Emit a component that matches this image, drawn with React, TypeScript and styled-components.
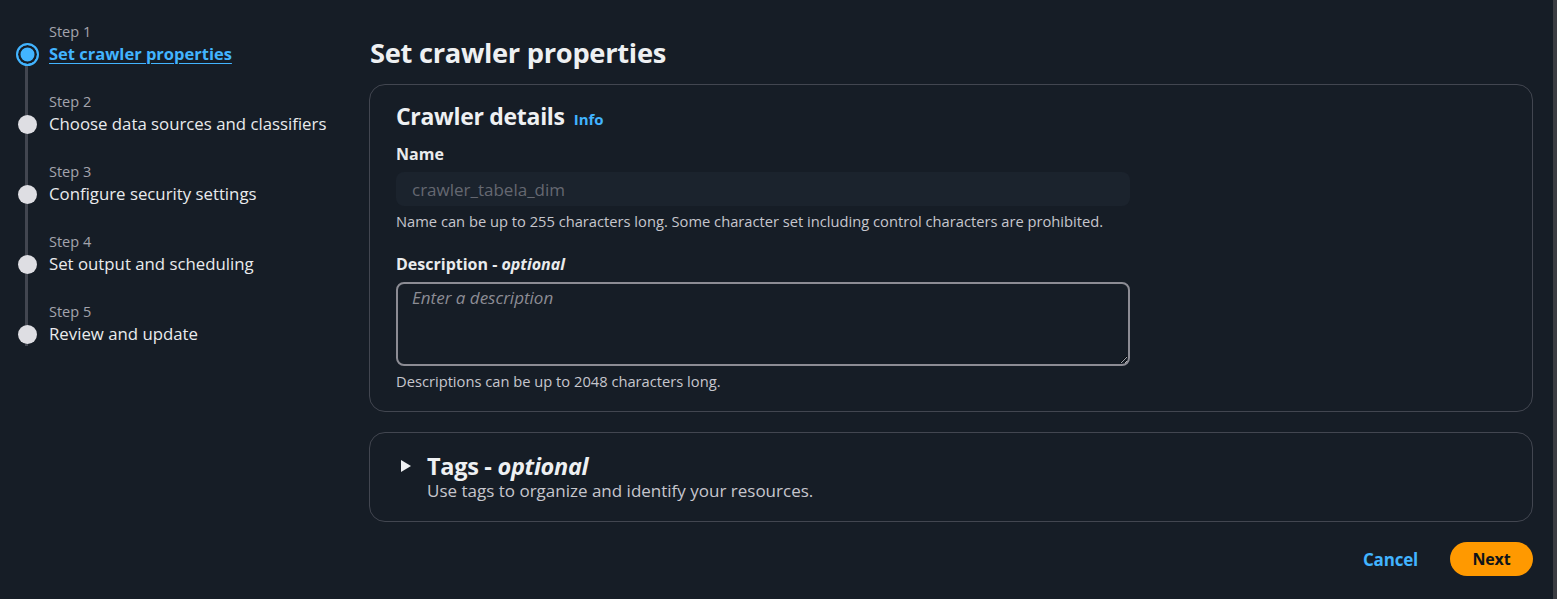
import React from "react";
import styled, { createGlobalStyle } from "styled-components";

const Global = createGlobalStyle`
  html, body { margin: 0; padding: 0; background: #161d26; }
  body { font-family: "Open Sans", Lato, sans-serif; color: #dedee3; }
  * { box-sizing: border-box; }
`;

const Page = styled.div`
  width: 1557px;
  height: 599px;
  display: flex;
  background: #161d26;
  border-right: 4px solid #3b3d42;
  overflow: hidden;
`;

const Sidebar = styled.nav`
  width: 369px;
  flex: none;
  padding: 22px 0 0 16px;
  display: flex;
  flex-direction: column;
`;

const Step = styled.div<{ $last?: boolean }>`
  position: relative;
  display: grid;
  grid-template-columns: 22px 1fr;
  grid-template-rows: 20px 24px;
  align-content: start;
  column-gap: 11px;
  height: 70px;
  &::after {
    content: "";
    display: ${(p) => (p.$last ? "none" : "block")};
    position: absolute;
    left: 9px;
    top: 44px;
    width: 3px;
    height: 70px;
    background: #424650;
  }
`;

const StepNum = styled.div`
  grid-column: 2;
  grid-row: 1;
  font-size: 14.5px;
  line-height: 20px;
  color: #a4a4ad;
`;

const Dot = styled.div<{ $active?: boolean }>`
  grid-column: 1;
  grid-row: 2;
  align-self: center;
  justify-self: center;
  position: relative;
  z-index: 1;
  width: ${(p) => (p.$active ? "23px" : "19px")};
  height: ${(p) => (p.$active ? "23px" : "19px")};
  border-radius: 50%;
  background: ${(p) => (p.$active ? "#42b4ff" : "#dedee3")};
  ${(p) =>
    p.$active
      ? `border: 2.5px solid #42b4ff; box-shadow: inset 0 0 0 2.5px #161d26;`
      : ""}
`;

const StepTitle = styled.div<{ $active?: boolean }>`
  grid-column: 2;
  grid-row: 2;
  font-size: ${(p) => (p.$active ? "16.5px" : "16.8px")};
  line-height: 24px;
  white-space: nowrap;
  color: ${(p) => (p.$active ? "#42b4ff" : "#e9ebed")};
  font-weight: ${(p) => (p.$active ? 700 : 400)};
  text-decoration: ${(p) => (p.$active ? "underline" : "none")};
  text-underline-offset: 3px;
`;

const Main = styled.main`
  flex: 1;
  padding: 34px 20px 0 0;
  display: flex;
  flex-direction: column;
`;

const PageTitle = styled.h1`
  margin: 0 0 12px 1px;
  font-size: 27.3px;
  line-height: 38px;
  font-weight: 700;
  letter-spacing: -0.3px;
  color: #eef0f2;
`;

const Card = styled.section<{ $mb?: number }>`
  border: 1px solid #424650;
  border-radius: 16px;
  margin-bottom: ${(p) => p.$mb ?? 0}px;
`;

const CardBody = styled.div`
  padding: 16px 26px 21px 26px;
  display: flex;
  flex-direction: column;
`;

const CardHeading = styled.h2`
  margin: 0 0 9px;
  display: flex;
  align-items: baseline;
  gap: 9px;
  font-size: 23px;
  line-height: 30px;
  font-weight: 700;
  letter-spacing: -0.3px;
  color: #eef0f2;
`;

const InfoLink = styled.a`
  font-size: 15px;
  font-weight: 700;
  letter-spacing: 0;
  color: #42b4ff;
  text-decoration: none;
`;

const Label = styled.label`
  display: block;
  font-size: 16px;
  line-height: 22px;
  font-weight: 700;
  color: #e9ebed;
  margin-bottom: 7px;
  em { font-style: italic; }
`;

const Field = styled.div<{ $mb?: number }>`
  width: 734px;
  margin-bottom: ${(p) => p.$mb ?? 0}px;
`;

const TextInput = styled.input`
  display: block;
  width: 100%;
  height: 34px;
  padding: 0 16px;
  border: none;
  border-radius: 8px;
  background: #1b232d;
  color: #656871;
  font-family: "Open Sans", sans-serif;
  font-size: 17px;
  outline: none;
`;

const TextArea = styled.textarea`
  display: block;
  width: 100%;
  height: 84px;
  padding: 2px 14px;
  border: 2px solid #8c8c94;
  border-radius: 8px;
  background: #161d26;
  color: #dedee3;
  font-family: "Open Sans", sans-serif;
  font-size: 17px;
  line-height: 24px;
  resize: vertical;
  outline: none;
  &::placeholder { color: #8c8c94; font-style: italic; }
`;

const Hint = styled.div`
  margin-top: 6px;
  font-size: 14.7px;
  line-height: 18px;
  color: #c6c6cd;
  white-space: nowrap;
`;

const Expander = styled.div`
  display: grid;
  grid-template-columns: 17px 1fr;
  column-gap: 10px;
  padding: 19px 26px 19px 30px;
  cursor: pointer;
`;

const Caret = styled.svg`
  align-self: center;
  grid-row: 1;
`;

const ExpTitle = styled.div`
  font-size: 23.5px;
  line-height: 28px;
  font-weight: 700;
  letter-spacing: -0.3px;
  color: #eef0f2;
  em { font-style: italic; }
`;

const ExpSub = styled.div`
  grid-column: 2;
  font-size: 17px;
  line-height: 22px;
  color: #c6c6cd;
`;

const Actions = styled.div`
  display: flex;
  justify-content: flex-end;
  align-items: center;
  gap: 32px;
  margin-top: 20px;
`;

const LinkButton = styled.button`
  background: none;
  border: none;
  padding: 0;
  font-family: "Open Sans", sans-serif;
  font-size: 17px;
  font-weight: 700;
  letter-spacing: -0.2px;
  color: #42b4ff;
  cursor: pointer;
`;

const PrimaryButton = styled.button`
  height: 34px;
  width: 83px;
  padding: 0;
  border: none;
  border-radius: 17px;
  background: #ff9900;
  color: #0f141a;
  font-family: "Open Sans", sans-serif;
  font-size: 16px;
  font-weight: 700;
  letter-spacing: -0.2px;
  cursor: pointer;
`;

const steps = [
  "Set crawler properties",
  "Choose data sources and classifiers",
  "Configure security settings",
  "Set output and scheduling",
  "Review and update",
];

export default function App() {
  return (
    <>
      <Global />
      <Page>
        <Sidebar>
          {steps.map((s, i) => (
            <Step key={s} $last={i === steps.length - 1}>
              <StepNum>Step {i + 1}</StepNum>
              <Dot $active={i === 0} />
              <StepTitle $active={i === 0}>{s}</StepTitle>
            </Step>
          ))}
        </Sidebar>
        <Main>
          <PageTitle>Set crawler properties</PageTitle>
          <Card $mb={20}>
            <CardBody>
              <CardHeading>
                Crawler details <InfoLink href="#">Info</InfoLink>
              </CardHeading>
              <Field $mb={23}>
                <Label>Name</Label>
                <TextInput value="crawler_tabela_dim" disabled readOnly />
                <Hint>
                  Name can be up to 255 characters long. Some character set including control characters are prohibited.
                </Hint>
              </Field>
              <Field>
                <Label>
                  Description - <em>optional</em>
                </Label>
                <TextArea placeholder="Enter a description" />
                <Hint>Descriptions can be up to 2048 characters long.</Hint>
              </Field>
            </CardBody>
          </Card>
          <Card>
            <Expander>
              <Caret width="12" height="14" viewBox="0 0 12 14">
                <path d="M1 1 L11 7 L1 13 Z" fill="#eef0f2" />
              </Caret>
              <ExpTitle>
                Tags - <em>optional</em>
              </ExpTitle>
              <ExpSub>Use tags to organize and identify your resources.</ExpSub>
            </Expander>
          </Card>
          <Actions>
            <LinkButton>Cancel</LinkButton>
            <PrimaryButton>Next</PrimaryButton>
          </Actions>
        </Main>
      </Page>
    </>
  );
}
